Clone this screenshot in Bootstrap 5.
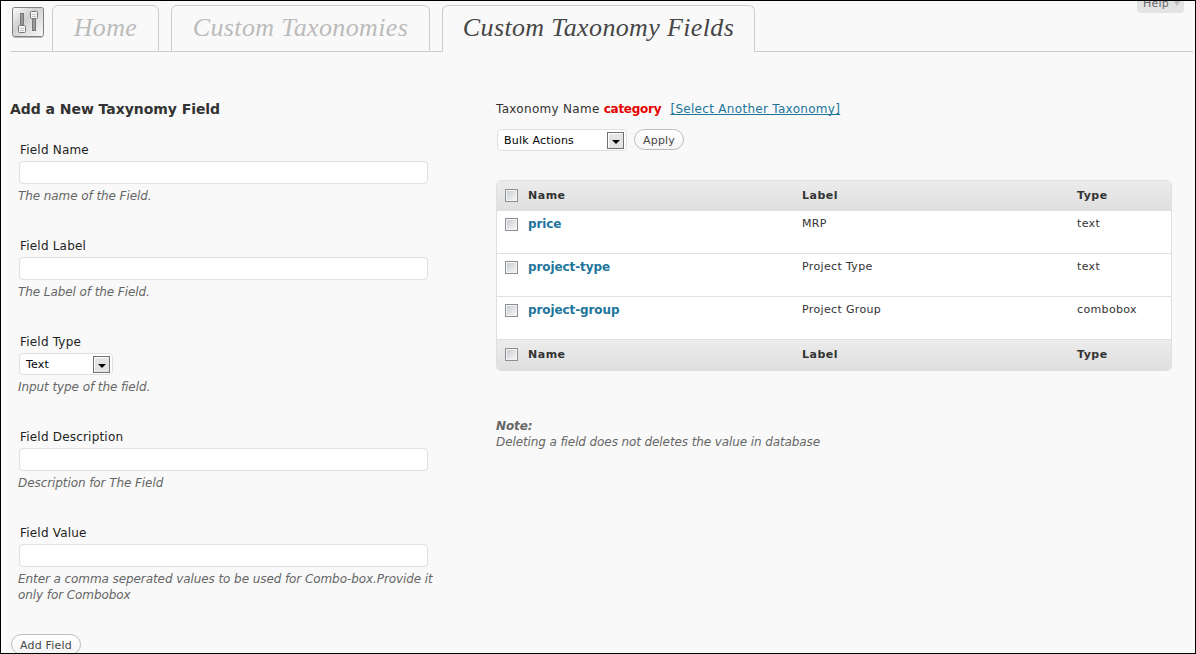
<!DOCTYPE html>
<html lang="en">
<head>
<meta charset="utf-8">
<title>Custom Taxonomy Fields</title>
<link href="https://cdn.jsdelivr.net/npm/bootstrap@5.3.0/dist/css/bootstrap.min.css" rel="stylesheet">
<style>
body{font:12px/16px Verdana,"DejaVu Sans",sans-serif;color:#333;background:#f9f9f9;height:654px;overflow:hidden}
.frame{height:654px;border:1px solid #000;overflow:hidden;background:linear-gradient(90deg,#fdfdfd 5px,#f9f9f9 5px)}
.head{height:51px;padding:4px 0 0 9px}
.head::after{content:"";flex:1;border-bottom:1px solid #ccc;margin-right:2px}
.tool{width:42px;border-bottom:1px solid #ccc}
.tool svg{display:block;margin:1px 0 0 1px}
.tab{height:47px;border:1px solid #ccc;border-radius:6px 6px 0 0;font:italic 26px/44px Georgia,"Liberation Serif",serif;letter-spacing:.36px;color:#bbb;text-decoration:none;text-align:center;white-space:nowrap}
.tab.now{color:#464646;border-bottom-color:#f9f9f9}
.gap-line{width:12px;border-bottom:1px solid #ccc}
.help{right:11px;top:0;width:47px;height:12px;background:#e3e3e3;border-radius:0 0 4px 4px;font-size:11px;line-height:13px;color:#666;padding-left:6px;letter-spacing:.2px}
.help span{display:inline-block;margin-top:-4px;vertical-align:top}
.help svg{vertical-align:top}
.left{width:485px;padding:49px 0 0 9px}
.right{width:676px;padding-top:49px;margin-left:10px}
h2{font-size:14px;line-height:16px;font-weight:700;margin:0 0 25px;letter-spacing:-.05px}
.field{height:96px;padding-left:9px}
.field.sel{height:95px}
.field label{display:block;height:19px;padding-left:1px;color:#222;letter-spacing:.2px}
.field .form-control{width:409px;height:23px;min-height:0;padding:2px 5px;border:1px solid #dfdfdf;border-radius:4px;font-size:12px}
.field p{margin:4px 0 0 -1px;font-style:italic;color:#666;width:430px;letter-spacing:-.08px}
.pick{height:22px;background:#fff;border:1px solid #dfdfdf;border-radius:4px;font-size:11px;color:#000;padding:0 2px 0 6px;letter-spacing:.2px}
.pick span{padding-top:1px}
.pick svg{display:block}
.pill{height:21px;border:1px solid #bbb;border-radius:11px;background:linear-gradient(#fff,#f5f5f5);font-size:11px;line-height:20px;color:#464646;padding:1px 0 0;text-align:center;letter-spacing:.2px}
.topline{white-space:nowrap;letter-spacing:.3px}
.topline b{color:#e60000;letter-spacing:-.28px;margin-right:1px}
.topline a{color:#21759b;text-decoration-skip-ink:none}
.grid-box{border:1px solid #dfdfdf;border-radius:5px;background:#fff;overflow:hidden;font-size:11px;line-height:14px}
.line{display:grid;grid-template-columns:31px 274px 275px 1fr;height:43px;border-bottom:1px solid #dfdfdf;padding-top:6px;letter-spacing:.35px}
.line.bar{height:30px;background:linear-gradient(#ececec,#dfdfdf);font-weight:700;padding-top:8px;letter-spacing:.5px}
.line.bar.end{border:0}
.line a{font-size:12px;font-weight:700;color:#21759b;text-decoration:none;line-height:14px;letter-spacing:-.1px}
.tick{width:13px;height:13px;margin:1px 0 0 8px;border:1px solid #8b8f93;background:linear-gradient(135deg,#c5c8cb,#fafafa);box-shadow:inset 0 0 0 1px #f4f4f4;appearance:none;display:block}
.bar .tick{margin-top:0}
.note-box{margin-top:47px;color:#666;letter-spacing:-.1px}
</style>
</head>
<body>
<div class="frame position-relative">
  <header class="head d-flex">
    <div class="tool">
      <svg width="34" height="34" viewBox="0 0 34 34">
        <defs><linearGradient id="g" x1="0" y1="0" x2="1" y2="1"><stop offset="0" stop-color="#fdfdfd"/><stop offset=".4" stop-color="#d0d0d0"/><stop offset="1" stop-color="#fafafa"/></linearGradient></defs>
        <rect x="1.5" y="1.5" width="31" height="29" rx="2" fill="url(#g)" stroke="#808080"/>
        <path d="M2.500 31.500h29" stroke="#bbb"/>
        <g stroke="#777" fill="#999">
          <rect x="9.500" y="7.500" width="3" height="14"/><rect x="21.500" y="11.500" width="3" height="13"/>
          <g fill="#f4f4f4"><rect x="7.500" y="19.500" width="7" height="7" rx="1"/><rect x="19.500" y="5.500" width="7" height="7" rx="1"/></g>
          <path d="M9 22.500h4M9 24.500h4M21 8.500h4M21 10.500h4" stroke="#c4c4c4"/>
        </g>
      </svg>
    </div>
    <a class="tab" style="width:107px" href="#">Home</a>
    <div class="gap-line"></div>
    <a class="tab" style="width:259px" href="#">Custom Taxonomies</a>
    <div class="gap-line"></div>
    <a class="tab now" style="width:313px" href="#">Custom Taxonomy Fields</a>
  </header>
  <div class="help position-absolute"><span>Help</span> <svg width="8" height="6"><path d="M1 0h6L4 5z" fill="#bbb"/></svg></div>
  <main class="d-flex">
    <form class="left">
      <h2>Add a New Taxynomy Field</h2>
      <div class="field"><label>Field Name</label><input class="form-control"><p>The name of the Field.</p></div>
      <div class="field"><label>Field Label</label><input class="form-control"><p>The Label of the Field.</p></div>
      <div class="field sel"><label>Field Type</label>
        <div class="pick d-flex align-items-center justify-content-between" style="width:94px"><span>Text</span>
          <svg width="17" height="17"><rect x=".5" y=".5" width="16" height="16" fill="#e4e4e4" stroke="#707070"/><path d="M1.500 15.500v-14h14" fill="none" stroke="#fff"/><path d="M5 8h8L9 12z"/></svg></div>
        <p>Input type of the field.</p></div>
      <div class="field"><label>Field Description</label><input class="form-control"><p>Description for The Field</p></div>
      <div class="field"><label>Field Value</label><input class="form-control"><p>Enter a comma seperated values to be used for Combo-box.Provide it<br>only for Combobox</p></div>
      <button type="button" class="pill d-block" style="width:70px;margin:13px 0 0 1px">Add Field</button>
    </form>
    <section class="right">
      <div class="topline">Taxonomy Name <b>category</b>&nbsp; <a href="#">[Select Another Taxonomy]</a></div>
      <div class="d-flex" style="margin:12px 0 0 1px;gap:7px">
        <div class="pick d-flex align-items-center justify-content-between" style="width:130px"><span>Bulk Actions</span>
          <svg width="17" height="17"><rect x=".5" y=".5" width="16" height="16" fill="#e4e4e4" stroke="#707070"/><path d="M1.500 15.500v-14h14" fill="none" stroke="#fff"/><path d="M5 8h8L9 12z"/></svg></div>
        <button type="button" class="pill" style="width:50px">Apply</button>
      </div>
      <div class="grid-box" style="margin-top:29px">
        <div class="line bar"><input type="checkbox" class="tick"><span>Name</span><span>Label</span><span>Type</span></div>
        <div class="line"><input type="checkbox" class="tick"><a href="#">price</a><span>MRP</span><span>text</span></div>
        <div class="line"><input type="checkbox" class="tick"><a href="#">project-type</a><span>Project Type</span><span>text</span></div>
        <div class="line"><input type="checkbox" class="tick"><a href="#">project-group</a><span>Project Group</span><span>combobox</span></div>
        <div class="line bar end"><input type="checkbox" class="tick"><span>Name</span><span>Label</span><span>Type</span></div>
      </div>
      <div class="note-box fst-italic"><b>Note:</b><br>Deleting a field does not deletes the value in database</div>
    </section>
  </main>
</div>
<script src="https://cdn.jsdelivr.net/npm/bootstrap@5.3.0/dist/js/bootstrap.bundle.min.js"></script>
</body>
</html>
